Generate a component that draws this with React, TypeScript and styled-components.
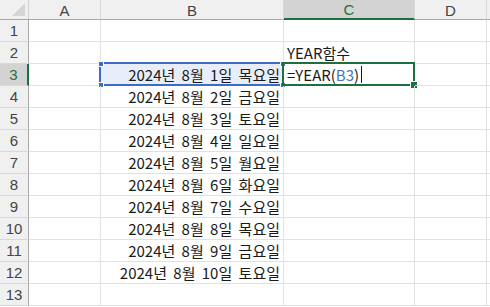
import React, { FC } from 'react';
import styled, { createGlobalStyle, css } from 'styled-components';

const GlobalStyle = createGlobalStyle`
  html, body {
    margin: 0;
    padding: 0;
    background: #ffffff;
  }
  body {
    font-family: 'Noto Sans CJK KR', 'Noto Sans', sans-serif;
  }
`;

const columns = [
  { key: 'A', width: 72 },
  { key: 'B', width: 183 },
  { key: 'C', width: 131 },
  { key: 'D', width: 72 },
];

const days = ['목', '금', '토', '일', '월', '화', '수', '목', '금', '토'];

const dateText = (row: number) => {
  if (row < 3 || row > 12) return '';
  const d = row - 2;
  return `2024년 8월 ${d}일 ${days[d - 1]}요일`;
};

const rows = Array.from({ length: 13 }, (_, i) => i + 1);

const App: FC = () => {
  return (
    <>
      <GlobalStyle />
      <Sheet>
        <Corner>
          <CornerTriangle />
        </Corner>
        {columns.map((c) => (
          <ColHeader key={c.key} active={c.key === 'C'}>
            {c.key}
          </ColHeader>
        ))}
        <ColHeader />

        {rows.map((r) => (
          <React.Fragment key={r}>
            <RowHeader active={r === 3}>{r}</RowHeader>
            <Cell />
            <Cell align="right" referenced={r === 3}>
              {dateText(r)}
              {r === 3 && (
                <>
                  <RefBorder />
                  <Handle style={{ left: -3, top: -3 }} />
                  <Handle style={{ right: -3, top: -3 }} />
                  <Handle style={{ left: -3, bottom: -3 }} />
                  <Handle style={{ right: -3, bottom: -3 }} />
                </>
              )}
            </Cell>
            <Cell>
              {r === 2 && 'YEAR함수'}
              {r === 3 && (
                <>
                  =YEAR(<RefText>B3</RefText>)<Caret />
                  <ActiveBorder />
                  <FillHandle />
                </>
              )}
            </Cell>
            <Cell />
            <Cell />
          </React.Fragment>
        ))}
      </Sheet>
    </>
  );
};

const Sheet = styled.div`
  display: grid;
  grid-template-columns: 29px 72px 183px 131px 72px 1fr;
  grid-template-rows: 20px repeat(13, 22px);
  width: 490px;
  height: 307px;
  overflow: hidden;
  font-size: 15px;
  color: #1a1a1a;
`;

const Corner = styled.div`
  position: relative;
  background: #f0f0f0;
  border-right: 1px solid #d0d0d0;
  border-bottom: 1px solid #a8a8a8;
`;

const CornerTriangle = styled.div`
  position: absolute;
  right: 3px;
  bottom: 3px;
  width: 0;
  height: 0;
  border-left: 13px solid transparent;
  border-bottom: 13px solid #d6d6d6;
`;

const ColHeader = styled.div<{ active?: boolean }>`
  display: flex;
  align-items: center;
  justify-content: center;
  background: #f0f0f0;
  border-right: 1px solid #d8d8d8;
  border-bottom: 1px solid #a8a8a8;
  color: #444444;
  font-family: 'Liberation Sans', 'Noto Sans', sans-serif;
  font-size: 15px;
  padding-top: 1px;
  box-sizing: border-box;

  ${({ active }) =>
    active &&
    css`
      background: #d3d3d3;
      color: #1e6f3f;
      border-bottom: 2px solid #1e6f3f;
    `}
`;

const RowHeader = styled.div<{ active?: boolean }>`
  display: flex;
  align-items: center;
  justify-content: center;
  background: #f0f0f0;
  border-right: 1px solid #a8a8a8;
  border-bottom: 1px solid #d8d8d8;
  color: #444444;
  font-family: 'Liberation Sans', 'Noto Sans', sans-serif;
  font-size: 15px;
  box-sizing: border-box;

  ${({ active }) =>
    active &&
    css`
      background: #d3d3d3;
      color: #1e6f3f;
      border-right: 2px solid #1e6f3f;
    `}
`;

const Cell = styled.div<{ align?: 'left' | 'right'; referenced?: boolean }>`
  position: relative;
  display: flex;
  align-items: center;
  justify-content: ${({ align }) => (align === 'right' ? 'flex-end' : 'flex-start')};
  padding: 0 3px 0 3px;
  border-right: 1px solid #e1e1e1;
  border-bottom: 1px solid #e1e1e1;
  white-space: pre;
  word-spacing: 3px;
  box-sizing: border-box;
  line-height: 1;
  background: ${({ referenced }) => (referenced ? '#e8eef9' : 'transparent')};
`;

const RefBorder = styled.div`
  position: absolute;
  left: -2px;
  top: -2px;
  right: -1px;
  bottom: -1px;
  border: 2px solid #3c6cc8;
  pointer-events: none;
`;

const Handle = styled.div`
  position: absolute;
  width: 6px;
  height: 6px;
  background: #3c6cc8;
  border: 1px solid #ffffff;
  box-sizing: border-box;
`;

const ActiveBorder = styled.div`
  position: absolute;
  left: -2px;
  top: -2px;
  right: -1px;
  bottom: -1px;
  border: 2px solid #1e6f3f;
  pointer-events: none;
`;

const FillHandle = styled.div`
  position: absolute;
  right: -4px;
  bottom: -4px;
  width: 6px;
  height: 6px;
  background: #1e6f3f;
  border: 1px solid #ffffff;
`;

const RefText = styled.span`
  color: #4472c4;
`;

const Caret = styled.span`
  display: inline-block;
  width: 1px;
  height: 17px;
  margin-left: 2px;
  background: #1a1a1a;
`;

export default App;
